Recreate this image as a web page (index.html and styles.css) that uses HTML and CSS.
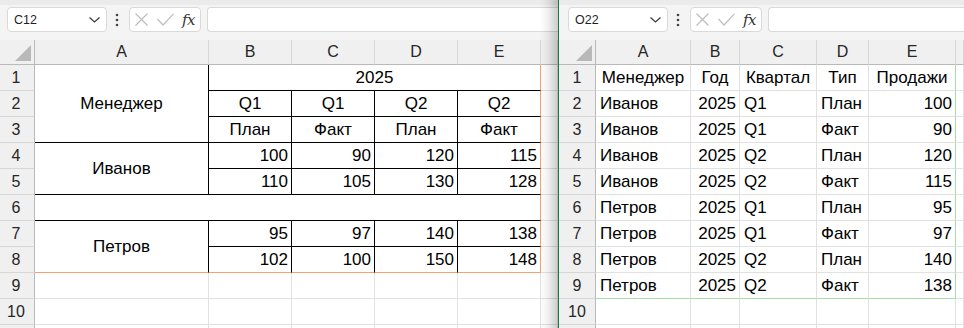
FILE: index.html
```html
<!DOCTYPE html>
<html lang="ru">
<head>
<meta charset="utf-8">
<title>Excel</title>
<link rel="stylesheet" href="styles.css">
</head>
<body>
<div class="app">
  <section class="pane pane-left">
    <div class="topband"></div>
    <div class="fbar">
      <div class="namebox"><span class="ref">C12</span>
        <svg class="chev" width="11" height="6" viewBox="0 0 11 6"><polyline points="0.5,0.5 5.5,5 10.5,0.5" fill="none" stroke="#3a3a3a" stroke-width="1.2"/></svg>
      </div>
      <svg class="dots" width="4" height="14" viewBox="0 0 4 14"><circle cx="2" cy="2" r="1.3" fill="#444"/><circle cx="2" cy="7" r="1.3" fill="#444"/><circle cx="2" cy="12" r="1.3" fill="#444"/></svg>
      <div class="fxbox">
        <svg class="ico-x" width="13" height="13" viewBox="0 0 13 13"><path d="M0.5 0.5 L12.5 12.5 M12.5 0.5 L0.5 12.5" stroke="#bdbdbd" stroke-width="1.2" fill="none"/></svg>
        <svg class="ico-ok" width="17" height="13" viewBox="0 0 17 13"><polyline points="0.5,6 6,12 16.5,0.8" stroke="#bdbdbd" stroke-width="1.2" fill="none"/></svg>
        <span class="fx">fx</span>
      </div>
      <div class="finput"></div>
    </div>
    <div class="grid grid-left">
      <div class="corner"><span class="tri"></span></div>
      <div class="ch">A</div><div class="ch">B</div><div class="ch">C</div><div class="ch">D</div><div class="ch">E</div><div class="ch"></div>

      <div class="rh">1</div>
      <div class="c mid ctr span-r3 br-k bb-k">Менеджер</div>
      <div class="c ctr span-c4 br-o bb-k">2025</div>
      <div class="c"></div>

      <div class="rh">2</div>
      <div class="c ctr br-k bb-k">Q1</div><div class="c ctr br-k bb-k">Q1</div><div class="c ctr br-k bb-k">Q2</div><div class="c ctr br-o bb-k">Q2</div>
      <div class="c"></div>

      <div class="rh">3</div>
      <div class="c ctr br-k bb-k">План</div><div class="c ctr br-k bb-k">Факт</div><div class="c ctr br-k bb-k">План</div><div class="c ctr br-o bb-k">Факт</div>
      <div class="c"></div>

      <div class="rh">4</div>
      <div class="c mid ctr span-r2 br-k bb-k">Иванов</div>
      <div class="c num br-k bb-k">100</div><div class="c num br-k bb-k">90</div><div class="c num br-k bb-k">120</div><div class="c num br-o bb-k">115</div>
      <div class="c"></div>

      <div class="rh">5</div>
      <div class="c num br-k bb-k">110</div><div class="c num br-k bb-k">105</div><div class="c num br-k bb-k">130</div><div class="c num br-o bb-k">128</div>
      <div class="c"></div>

      <div class="rh">6</div>
      <div class="c span-c5 br-o bb-k"></div>
      <div class="c"></div>

      <div class="rh">7</div>
      <div class="c mid ctr span-r2 br-k bb-o">Петров</div>
      <div class="c num br-k bb-k">95</div><div class="c num br-k bb-k">97</div><div class="c num br-k bb-k">140</div><div class="c num br-o bb-k">138</div>
      <div class="c"></div>

      <div class="rh">8</div>
      <div class="c num br-k bb-o">102</div><div class="c num br-k bb-o">100</div><div class="c num br-k bb-o">150</div><div class="c num br-o bb-o">148</div>
      <div class="c"></div>

      <div class="rh">9</div>
      <div class="c"></div><div class="c"></div><div class="c"></div><div class="c"></div><div class="c"></div><div class="c"></div>
      <div class="rh">10</div>
      <div class="c"></div><div class="c"></div><div class="c"></div><div class="c"></div><div class="c"></div><div class="c"></div>
      <div class="rh"></div>
      <div class="c"></div><div class="c"></div><div class="c"></div><div class="c"></div><div class="c"></div><div class="c"></div>
    </div>
    <div class="shade"></div>
  </section>

  <div class="divider"></div>

  <section class="pane pane-right">
    <div class="topband"></div>
    <div class="fbar">
      <div class="namebox"><span class="ref">O22</span>
        <svg class="chev" width="11" height="6" viewBox="0 0 11 6"><polyline points="0.5,0.5 5.5,5 10.5,0.5" fill="none" stroke="#3a3a3a" stroke-width="1.2"/></svg>
      </div>
      <svg class="dots" width="4" height="14" viewBox="0 0 4 14"><circle cx="2" cy="2" r="1.3" fill="#444"/><circle cx="2" cy="7" r="1.3" fill="#444"/><circle cx="2" cy="12" r="1.3" fill="#444"/></svg>
      <div class="fxbox">
        <svg class="ico-x" width="13" height="13" viewBox="0 0 13 13"><path d="M0.5 0.5 L12.5 12.5 M12.5 0.5 L0.5 12.5" stroke="#bdbdbd" stroke-width="1.2" fill="none"/></svg>
        <svg class="ico-ok" width="17" height="13" viewBox="0 0 17 13"><polyline points="0.5,6 6,12 16.5,0.8" stroke="#bdbdbd" stroke-width="1.2" fill="none"/></svg>
        <span class="fx">fx</span>
      </div>
      <div class="finput"></div>
    </div>
    <div class="grid grid-right">
      <div class="corner"><span class="tri"></span></div>
      <div class="ch">A</div><div class="ch">B</div><div class="ch">C</div><div class="ch">D</div><div class="ch">E</div><div class="ch"></div>

      <div class="rh">1</div>
      <div class="c ctr">Менеджер</div><div class="c ctr">Год</div><div class="c ctr">Квартал</div><div class="c ctr">Тип</div><div class="c ctr br-g">Продажи</div><div class="c"></div>

      <div class="rh">2</div>
      <div class="c">Иванов</div><div class="c num">2025</div><div class="c">Q1</div><div class="c">План</div><div class="c num br-g">100</div><div class="c"></div>
      <div class="rh">3</div>
      <div class="c">Иванов</div><div class="c num">2025</div><div class="c">Q1</div><div class="c">Факт</div><div class="c num br-g">90</div><div class="c"></div>
      <div class="rh">4</div>
      <div class="c">Иванов</div><div class="c num">2025</div><div class="c">Q2</div><div class="c">План</div><div class="c num br-g">120</div><div class="c"></div>
      <div class="rh">5</div>
      <div class="c">Иванов</div><div class="c num">2025</div><div class="c">Q2</div><div class="c">Факт</div><div class="c num br-g">115</div><div class="c"></div>
      <div class="rh">6</div>
      <div class="c">Петров</div><div class="c num">2025</div><div class="c">Q1</div><div class="c">План</div><div class="c num br-g">95</div><div class="c"></div>
      <div class="rh">7</div>
      <div class="c">Петров</div><div class="c num">2025</div><div class="c">Q1</div><div class="c">Факт</div><div class="c num br-g">97</div><div class="c"></div>
      <div class="rh">8</div>
      <div class="c">Петров</div><div class="c num">2025</div><div class="c">Q2</div><div class="c">План</div><div class="c num br-g">140</div><div class="c"></div>
      <div class="rh">9</div>
      <div class="c bb-g">Петров</div><div class="c num bb-g">2025</div><div class="c bb-g">Q2</div><div class="c bb-g">Факт</div><div class="c num br-g bb-g">138</div><div class="c"></div>
      <div class="rh">10</div>
      <div class="c"></div><div class="c"></div><div class="c"></div><div class="c"></div><div class="c"></div><div class="c"></div>
      <div class="rh"></div>
      <div class="c"></div><div class="c"></div><div class="c"></div><div class="c"></div><div class="c"></div><div class="c"></div>
    </div>
  </section>
</div>
</body>
</html>
```
FILE: styles.css
```css
* { box-sizing: border-box; }

html, body {
  margin: 0;
  padding: 0;
  background: #ffffff;
}

body {
  font-family: "Liberation Sans", Arial, sans-serif;
  color: #000;
}

.app {
  display: flex;
  width: 964px;
  height: 328px;
  overflow: hidden;
}

.pane {
  position: relative;
  display: flex;
  flex-direction: column;
  overflow: hidden;
  background: #fff;
}

.pane-left {
  flex: 0 0 560px;
  margin-left: -2px;
}

.pane-right {
  flex: 1 1 auto;
}

.divider {
  flex: 0 0 1px;
  background: #107c41;
}

.topband {
  height: 5px;
  background: #ebebeb;
  flex: none;
}

.fbar {
  height: 35px;
  flex: none;
  background: #f4f4f4;
  display: flex;
  align-items: flex-start;
  padding: 2px 0 0 9px;
}

.namebox {
  width: 100px;
  height: 25px;
  background: #fff;
  border: 1px solid #d9d9d9;
  border-radius: 4px;
  display: flex;
  align-items: center;
  padding: 1px 0 0 6px;
  font-size: 12.5px;
  color: #1f1f1f;
}

.namebox .ref { flex: 1 1 auto; }

.chev {
  margin-right: 6px;
  margin-top: -1px;
}

.dots {
  margin: 6px 0 0 8px;
}

.fxbox {
  margin-left: 10px;
  width: 72px;
  height: 25px;
  background: #fff;
  border: 1px solid #d9d9d9;
  border-radius: 4px;
  display: flex;
  align-items: center;
  padding-left: 5px;
}

.ico-x { margin-left: 0; }
.ico-ok { margin-left: 9px; }

.fx {
  margin-left: 8px;
  font-family: "DejaVu Serif", "Liberation Serif", serif;
  font-style: italic;
  font-size: 15px;
  color: #333;
  letter-spacing: -0.5px;
}

.finput {
  margin-left: 6px;
  flex: 1 1 auto;
  height: 25px;
  background: #fff;
  border: 1px solid #d9d9d9;
  border-right: none;
  border-radius: 4px 0 0 4px;
}

/* ---------- grid ---------- */
.grid {
  display: grid;
  grid-template-rows: 25px repeat(10, 26px) 26px;
  flex: none;
}

.grid-left {
  grid-template-columns: 37px 174px 83px 83px 83px 83px 1fr;
}

.grid-right {
  grid-template-columns: 37px 95px 49px 77px 52px 87px 1fr;
}

.corner {
  position: relative;
  background: #f0f0f0;
  border-right: 1px solid #b9b9b9;
  border-bottom: 1px solid #b9b9b9;
}

.tri {
  position: absolute;
  right: 3px;
  bottom: 3px;
  width: 0;
  height: 0;
  border-left: 16px solid transparent;
  border-bottom: 16px solid #b9b9b9;
}

.ch {
  background: #f0f0f0;
  border-right: 1px solid #d6d6d6;
  border-bottom: 1px solid #b9b9b9;
  display: flex;
  align-items: center;
  justify-content: center;
  font-size: 16px;
  line-height: 20px;
  color: #262626;
}

.rh {
  background: #f0f0f0;
  border-right: 1px solid #b9b9b9;
  border-bottom: 1px solid #d6d6d6;
  display: flex;
  align-items: center;
  justify-content: center;
  font-size: 16px;
  line-height: 20px;
  color: #262626;
}

.c {
  border-right: 1px solid #e1e1e1;
  border-bottom: 1px solid #e1e1e1;
  display: flex;
  align-items: flex-end;
  justify-content: flex-start;
  padding: 0 3px 2px 4px;
  font-size: 17px;
  line-height: 20px;
  white-space: nowrap;
  overflow: hidden;
}

.num { justify-content: flex-end; }
.ctr { justify-content: center; padding-left: 0; padding-right: 0; }
.mid { align-items: center; padding-bottom: 0; }

.span-r3 { grid-row: span 3; }
.span-r2 { grid-row: span 2; }
.span-c4 { grid-column: span 4; }
.span-c5 { grid-column: span 5; }

.br-k { border-right-color: #000; }
.bb-k { border-bottom-color: #000; }
.br-o { border-right-color: #f4a071; }
.bb-o { border-bottom-color: #f4a071; }
.br-g { border-right-color: #a6e0a6; }
.bb-g { border-bottom-color: #a6e0a6; }

.shade {
  position: absolute;
  top: 0;
  right: 0;
  bottom: 0;
  width: 18px;
  background: linear-gradient(to right, rgba(0,0,0,0) 0%, rgba(0,0,0,0.05) 40%, rgba(0,0,0,0.2) 100%);
  pointer-events: none;
}
```
